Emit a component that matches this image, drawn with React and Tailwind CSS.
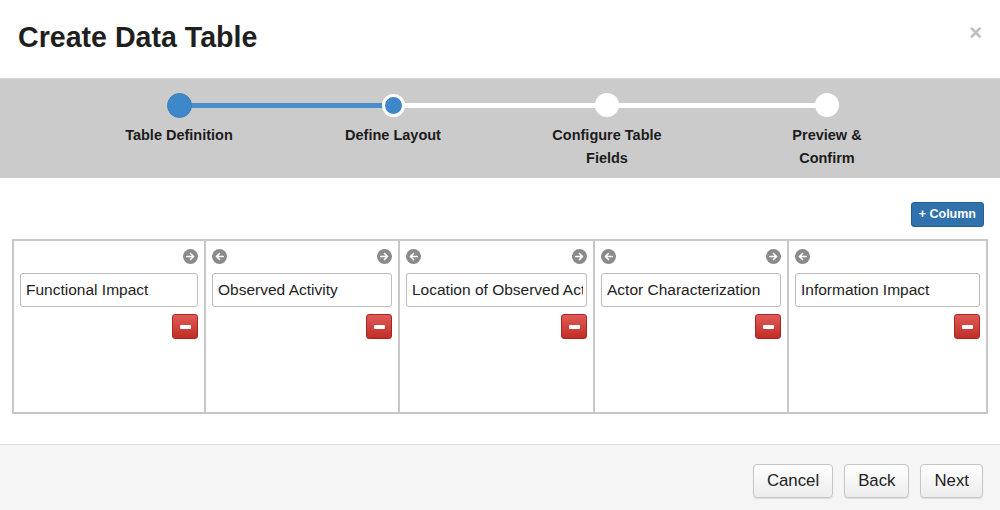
import React from "react";

const steps = [
  { label: ["Table Definition"], state: "done" },
  { label: ["Define Layout"], state: "current" },
  { label: ["Configure Table", "Fields"], state: "todo" },
  { label: ["Preview &", "Confirm"], state: "todo" },
];

const columns = [
  "Functional Impact",
  "Observed Activity",
  "Location of Observed Activity",
  "Actor Characterization",
  "Information Impact",
];

const colWidths = ["w-[190px]", "w-[194px]", "w-[195px]", "w-[194px]", "flex-1"];

function ArrowIcon({ dir }) {
  return (
    <svg width="15" height="15" viewBox="0 0 16 16">
      <circle cx="8" cy="8" r="8" fill="#8a8a8a" />
      {dir === "right" ? (
        <path d="M4 8h7M8 4.8L11.2 8 8 11.2" stroke="#fff" strokeWidth="1.8" fill="none" strokeLinecap="round" strokeLinejoin="round" />
      ) : (
        <path d="M12 8H5M8 4.8L4.8 8 8 11.2" stroke="#fff" strokeWidth="1.8" fill="none" strokeLinecap="round" strokeLinejoin="round" />
      )}
    </svg>
  );
}

function StepDot({ state }) {
  if (state === "done") {
    return <div className="h-[25px] w-[25px] rounded-full bg-[#3e87c9] border border-[#3a7fbd]" />;
  }
  if (state === "current") {
    return <div className="h-[23px] w-[23px] rounded-full bg-[#3e87c9] border-[3px] border-white" />;
  }
  return <div className="h-[24px] w-[24px] rounded-full bg-white" />;
}

export default function App() {
  return (
    <div className="w-[1000px] h-[510px] bg-white flex flex-col overflow-hidden" style={{ fontFamily: "'Liberation Sans', Arial, sans-serif" }}>
      <div className="h-[78px] flex items-start justify-between pl-[18px] pr-[18px] pt-[20px]">
        <h1 className="text-[28.6px] font-bold text-[#1f1f1f] leading-[34px]">Create Data Table</h1>
        <span className="text-[22px] leading-[14px] mt-[6px] text-[#bdbdbd] font-bold">×</span>
      </div>

      <div className="h-[100px] bg-[#cbcbcb] border-t border-[#d9d9d9] relative">
        <div className="absolute left-[179px] top-[24px] w-[214px] h-[5px] bg-[#4a8dcc]" />
        <div className="absolute left-[393px] top-[24px] w-[434px] h-[5px] bg-white" />
        <div className="grid grid-cols-[214px_214px_214px_226px] ml-[72px] pt-[14px]">
          {steps.map((s, i) => (
            <div key={i} className="flex flex-col items-center relative">
              <div className="h-[24px] flex items-center">
                <StepDot state={s.state} />
              </div>
              <div className="mt-[7px] text-center text-[14.5px] font-bold text-[#1c1c1c] leading-[23px]">
                {s.label.map((l) => (
                  <div key={l}>{l}</div>
                ))}
              </div>
            </div>
          ))}
        </div>
      </div>

      <div className="flex-1 flex flex-col">
        <div className="flex justify-end pr-[16px] pt-[24px]">
          <button className="h-[25px] px-[7px] rounded-[3px] bg-[#2f72ad] border border-[#285f90] text-white text-[12.5px] font-bold leading-none">
            + Column
          </button>
        </div>

        <div className="mx-[12px] mt-[12px] h-[175px] border-2 border-[#c8c8c8] flex">
          {columns.map((c, i) => (
            <div
              key={c}
              className={`${colWidths[i]} min-w-0 pl-[6px] pr-[6px] pt-[7px] ${i > 0 ? "border-l-2 border-[#c8c8c8]" : ""}`}
            >
              <div className="flex justify-between h-[16px] items-center">
                <div>{i > 0 && <ArrowIcon dir="left" />}</div>
                <div>{i < columns.length - 1 && <ArrowIcon dir="right" />}</div>
              </div>
              <div className="mt-[9px] h-[34px] border border-[#bcbcbc] rounded-[3px] pl-[5px] pr-[3px]">
                <div className="h-full flex items-center overflow-hidden whitespace-nowrap text-[15.5px] text-[#222]">
                  {c}
                </div>
              </div>
              <div className="flex justify-end mt-[7px]">
                <div className="w-[26px] h-[25px] rounded-[3px] bg-gradient-to-b from-[#e05a55] to-[#c12c27] border border-[#a82420] flex items-center justify-center">
                  <div className="w-[11px] h-[4px] bg-white rounded-[1px]" />
                </div>
              </div>
            </div>
          ))}
        </div>

        <div className="mt-auto h-[66px] bg-[#f5f5f5] border-t border-[#dcdcdc] flex justify-end items-center gap-[11px] pr-[17px] pt-[7px]">
          {["Cancel", "Back", "Next"].map((b) => (
            <button
              key={b}
              className="h-[34px] px-[13px] rounded-[4px] border border-[#c6c6c6] bg-gradient-to-b from-white to-[#ececec] text-[16.8px] text-[#222] shadow-[0_1px_1px_rgba(0,0,0,0.1)]"
            >
              {b}
            </button>
          ))}
        </div>
      </div>
    </div>
  );
}
